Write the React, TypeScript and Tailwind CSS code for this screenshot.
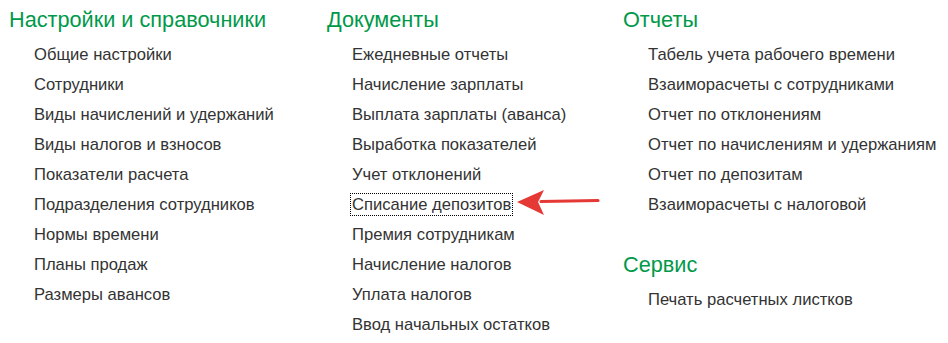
const columns: { title: string; items: string[] }[][] = [
  [
    {
      title: "Настройки и справочники",
      items: [
        "Общие настройки",
        "Сотрудники",
        "Виды начислений и удержаний",
        "Виды налогов и взносов",
        "Показатели расчета",
        "Подразделения сотрудников",
        "Нормы времени",
        "Планы продаж",
        "Размеры авансов",
      ],
    },
  ],
  [
    {
      title: "Документы",
      items: [
        "Ежедневные отчеты",
        "Начисление зарплаты",
        "Выплата зарплаты (аванса)",
        "Выработка показателей",
        "Учет отклонений",
        "Списание депозитов",
        "Премия сотрудникам",
        "Начисление налогов",
        "Уплата налогов",
        "Ввод начальных остатков",
      ],
    },
  ],
  [
    {
      title: "Отчеты",
      items: [
        "Табель учета рабочего времени",
        "Взаиморасчеты с сотрудниками",
        "Отчет по отклонениям",
        "Отчет по начислениям и удержаниям",
        "Отчет по депозитам",
        "Взаиморасчеты с налоговой",
      ],
    },
    {
      title: "Сервис",
      items: ["Печать расчетных листков"],
    },
  ],
];

const widths = ["w-[318px]", "w-[296px]", "w-[316px]"];

function Arrow() {
  return (
    <svg
      className="absolute left-[166px] top-[-6px]"
      width="84"
      height="30"
      viewBox="0 0 84 30"
    >
      <path d="M24 13.5 L81 12.5" stroke="#e53935" strokeWidth="3.2" strokeLinecap="round" />
      <path d="M0 14 L27 2 L21 14 L27 27 Z" fill="#e53935" />
    </svg>
  );
}

export default function App() {
  return (
    <div className="w-[948px] h-[343px] bg-white pl-[9px] pt-[7px] flex font-['Liberation_Sans',Arial,sans-serif]">
      {columns.map((sections, ci) => (
        <div key={ci} className={`${widths[ci]} shrink-0 flex flex-col`}>
          {sections.map((sec, si) => (
            <div key={sec.title} className={si > 0 ? "mt-[32px]" : ""}>
              <div className="text-[21.7px] leading-[26px] text-[#00994a] mb-[7px] whitespace-nowrap">{sec.title}</div>
              <ul className="pl-[25px]">
                {sec.items.map((item) => (
                  <li key={item} className="text-[16.6px] leading-[30px] text-[#333333] whitespace-nowrap">
                    {item === "Списание депозитов" ? (
                      <span className="relative inline-block leading-[21px] -ml-[2px] px-px border border-dotted border-black">
                        {item}
                        <Arrow />
                      </span>
                    ) : (
                      item
                    )}
                  </li>
                ))}
              </ul>
            </div>
          ))}
        </div>
      ))}
    </div>
  );
}
